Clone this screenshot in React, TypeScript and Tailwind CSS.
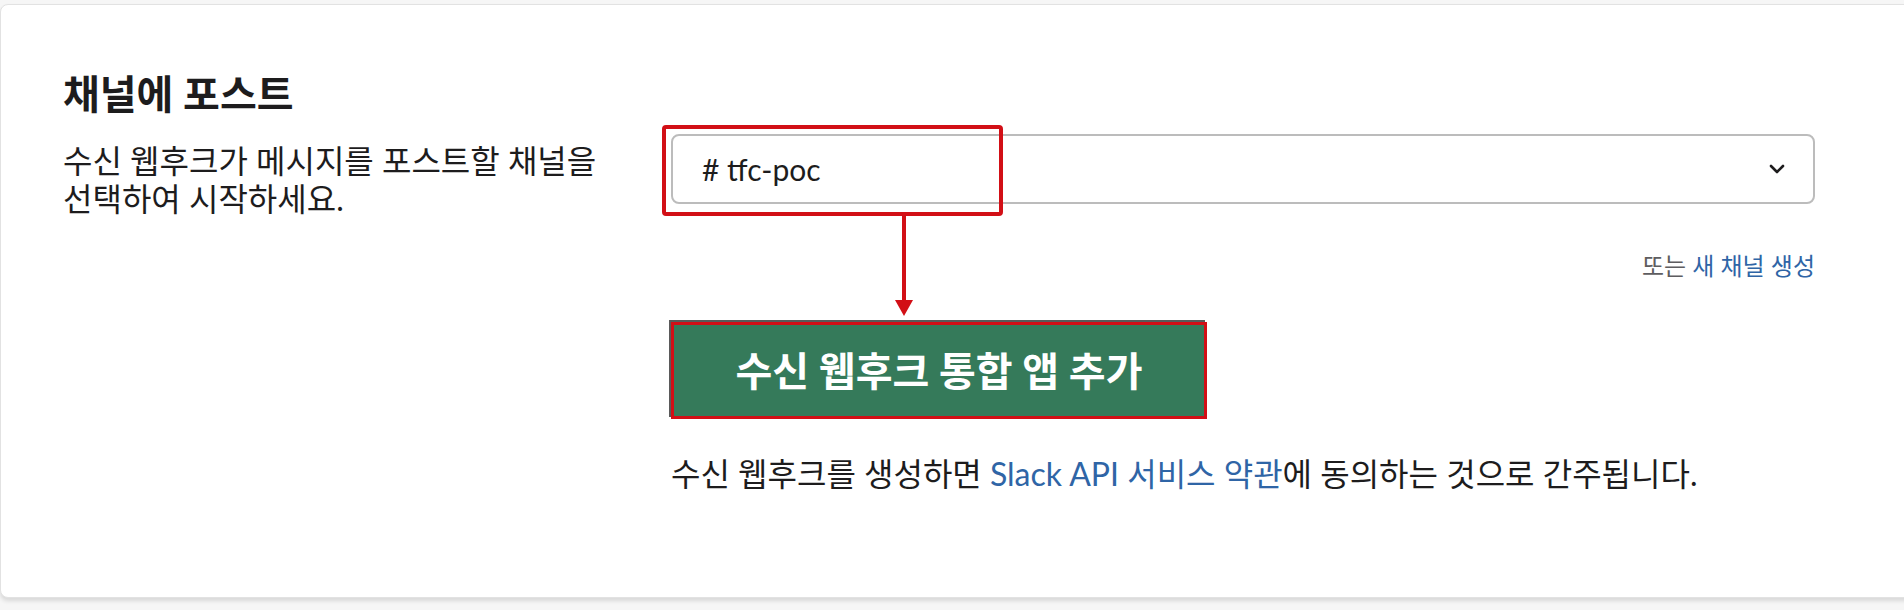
const FONT = "font-['Lato','Noto_Sans_CJK_KR',sans-serif]";

const Chevron = () => (
  <svg width="16" height="10" viewBox="0 0 16 10" fill="none">
    <path d="M2 2l6 6 6-6" stroke="#1d1c1d" strokeWidth="2.6" strokeLinecap="round" strokeLinejoin="round" />
  </svg>
);

const App = () => {
  return (
    <div className={`h-[610px] w-full overflow-hidden bg-[#f6f6f6] pt-[4px] ${FONT} text-[#1d1c1d] break-keep`}>
      {/* Card */}
      <div className="h-[594px] w-[1960px] rounded-l-lg border border-[#e2e2e2] bg-white pl-[62px] pt-[67px] shadow-[0_3px_4px_rgba(0,0,0,0.12)]">
        <h2 className="text-[40px] font-bold leading-[44px]">채널에 포스트</h2>

        <div className="mt-[18px] grid grid-cols-[608px_1144px]">
          {/* Left: description */}
          <p className="w-[560px] pt-[8px] text-[32px] leading-[38px]">
            수신 웹후크가 메시지를 포스트할 채널을 선택하여 시작하세요.
          </p>

          {/* Right: form */}
          <div className="relative">
            <div className="flex h-[70px] items-center justify-between rounded-lg border-2 border-[#bcbcbc] pl-[29px] pr-[28px]">
              <span className="text-[30px] leading-none"># tfc-poc</span>
              <Chevron />
            </div>

            {/* highlight box + arrow */}
            <div className="pointer-events-none absolute left-[-9px] top-[-9px] h-[91px] w-[341px] rounded-sm border-4 border-[#d20f16]" />
            <div className="pointer-events-none absolute left-[224px] top-[82px] flex flex-col items-center">
              <div className="h-[84px] w-[4px] bg-[#d20f16]" />
              <svg width="18" height="16" viewBox="0 0 18 16">
                <path d="M0 0h18L9 16z" fill="#d20f16" />
              </svg>
            </div>

            <div className="mt-[45px] text-right text-[24px] leading-[34px]">
              <span className="text-[#5e5d60]">또는 </span>
              <a className="text-[#2f65a6]">새 채널 생성</a>
            </div>

            <button className="mt-[39px] flex h-[97px] w-[536px] items-center justify-center border-[3px] border-[#d20f16] bg-[#357a5a] text-[40px] font-bold text-white shadow-[-2px_-2px_0_#5a5a5a]">
              수신 웹후크 통합 앱 추가
            </button>

            <p className="mt-[35px] text-[32px] leading-[40px]">
              수신 웹후크를 생성하면 <a className="text-[#2f65a6]">Slack API 서비스 약관</a>에 동의하는 것으로 간주됩니다.
            </p>
          </div>
        </div>
      </div>
    </div>
  );
};

export default App;
